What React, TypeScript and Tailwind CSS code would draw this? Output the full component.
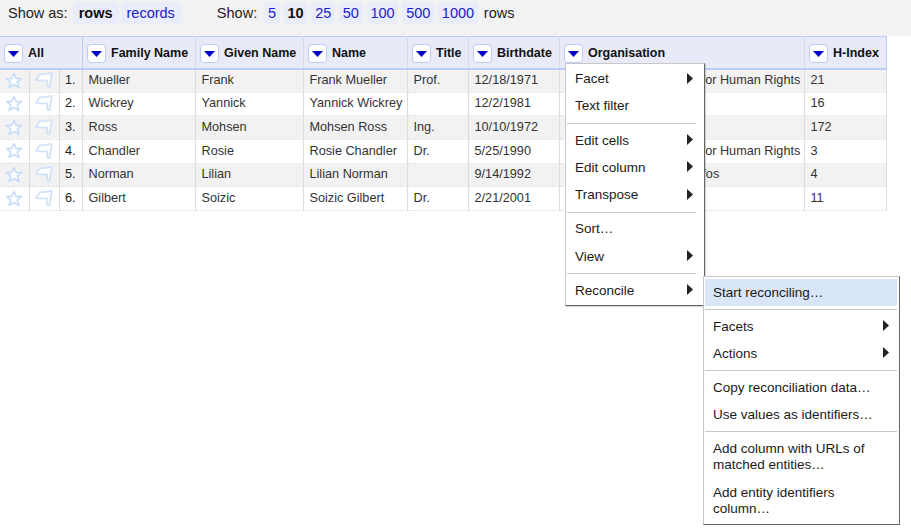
import { ReactNode } from "react"

const columns = [
  { name: "Family Name", width: 113 },
  { name: "Given Name", width: 108 },
  { name: "Name", width: 104 },
  { name: "Title", width: 61 },
  { name: "Birthdate", width: 91 },
  { name: "Organisation", width: 245 },
  { name: "H-Index", width: 82 },
]

const rows = [
  ["Mueller", "Frank", "Frank Mueller", "Prof.", "12/18/1971", "International Movement for Human Rights", "21"],
  ["Wickrey", "Yannick", "Yannick Wickrey", "", "12/2/1981", "", "16"],
  ["Ross", "Mohsen", "Mohsen Ross", "Ing.", "10/10/1972", "", "172"],
  ["Chandler", "Rosie", "Rosie Chandler", "Dr.", "5/25/1990", "International Movement for Human Rights", "3"],
  ["Norman", "Lilian", "Lilian Norman", "", "9/14/1992", "Syndicat National des Infos", "4"],
  ["Gilbert", "Soizic", "Soizic Gilbert", "Dr.", "2/21/2001", "", "11"],
]

function DropButton() {
  return (
    <span className="inline-flex h-[19px] w-[19px] shrink-0 items-center justify-center rounded-[4px] border border-[#b9cdf7] bg-white">
      <svg width="11" height="6" viewBox="0 0 11 6">
        <path d="M0 0h11L5.500 6z" fill="#0000c4" />
      </svg>
    </span>
  )
}

function Star() {
  return (
    <svg width="18" height="18" viewBox="0 0 18 18" fill="none">
      <path d="M9 1.500l2.200 5h5.300l-4.200 3.400 1.600 5.600L9 12.400l-4.900 3.100 1.600-5.600L1.500 6.500h5.300z" stroke="#c4dcf8" strokeWidth="1.600" strokeLinejoin="round" fill="#fff" />
    </svg>
  )
}

function Flag() {
  return (
    <svg width="18" height="17" viewBox="0 0 18 17" fill="none">
      <path d="M1 8L5 2c3 1 7 0 11.500-1 .5 3-.5 6-1 8l-1 6h-2l-.5-6.500C8 8 4 9 1 8z" stroke="#d0e3f9" strokeWidth="1.800" strokeLinejoin="round" fill="#fff" />
    </svg>
  )
}

function Arrow() {
  return (
    <svg width="6" height="11" viewBox="0 0 6 11" className="mb-[2px] shrink-0">
      <path d="M0 0l6 5.500L0 11z" fill="#222" />
    </svg>
  )
}

function MenuItem({ children, sub, active, wrap, tall }: { children: ReactNode; sub?: boolean; active?: boolean; wrap?: boolean; tall?: boolean }) {
  return (
    <div className={`flex items-center justify-between pl-2 pr-[3px] text-[13.500px] leading-[16px] text-[#1a1a1a] ${tall ? "py-[5.625px]" : "py-[5.500px]"} ${active ? "bg-[#d9e6f7]" : ""} ${wrap ? "pr-[14px]" : ""}`}>
      <span>{children}</span>
      {sub && <Arrow />}
    </div>
  )
}

function Divider() {
  return <div className="my-[3px] h-px bg-[#c8c8c8]" />
}

function PageLink({ children, bold }: { children: ReactNode; bold?: boolean }) {
  return (
    <span className={`rounded-[4px] bg-[#e9ecf9] px-[3.750px] py-[2px] ${bold ? "font-bold text-[#111]" : "text-[#2222cc]"}`}>
      {children}
    </span>
  )
}

export default function App() {
  return (
    <div className="relative h-[532px] w-[911px] overflow-hidden bg-white text-[12.700px] text-[#333]" style={{ fontFamily: '"Liberation Sans", Arial, sans-serif' }}>
      {/* Toolbar */}
      <div className="flex h-[36px] items-start bg-[#f2f2f2] pl-[8px] pt-[2px] text-[14.500px] leading-[18px] text-[#222]">
        <span className="mr-[5px] py-[2px]">Show as:</span>
        <span className="flex gap-[2px]">
          <span className="rounded-[4px] bg-[#e9ecf9] px-[6px] py-[2px] font-bold text-[#111]">rows</span>
          <span className="rounded-[4px] bg-[#e9ecf9] px-[6px] py-[2px] text-[#2222cc]">records</span>
        </span>
        <span className="ml-[36px] mr-[7px] py-[2px]">Show:</span>
        <span className="flex gap-[4px]">
          <PageLink>5</PageLink>
          <PageLink bold>10</PageLink>
          <PageLink>25</PageLink>
          <PageLink>50</PageLink>
          <PageLink>100</PageLink>
          <PageLink>500</PageLink>
          <PageLink>1000</PageLink>
        </span>
        <span className="ml-[6px] py-[2px]">rows</span>
      </div>

      {/* Data table */}
      <table className="w-[886px] table-fixed border-collapse">
        <colgroup>
          <col className="w-[29px]" />
          <col className="w-[30px]" />
          <col className="w-[23px]" />
          {columns.map((c) => (
            <col key={c.name} style={{ width: c.width }} />
          ))}
        </colgroup>
        <thead>
          <tr className="h-[32px] border-t border-b-[2px] border-[#b9cdf7] bg-[#e8ebf7] text-[12.500px]">
            <th colSpan={3} className="border-r border-[#b9cdf7] pl-[4px] pt-[3px] text-left">
              <span className="flex items-center gap-[5px] font-bold text-[#111]"><DropButton />All</span>
            </th>
            {columns.map((c) => (
              <th key={c.name} className="border-r border-[#d4dcf2] pl-[4.500px] pt-[3px] text-left last:border-[#b9cdf7]">
                <span className="flex items-center gap-[5px] font-bold text-[#111]"><DropButton />{c.name}</span>
              </th>
            ))}
          </tr>
        </thead>
        <tbody>
          {rows.map((row, i) => (
            <tr key={row[0]} className={`h-[23.670px] border-b border-dotted border-[#ddd] ${i % 2 === 0 ? "bg-[#f2f2f2]" : "bg-white"}`}>
              <td className="border-r border-[#ddd]"><span className="flex justify-center"><Star /></span></td>
              <td className="border-r border-[#ddd]"><span className="flex justify-center"><Flag /></span></td>
              <td className="border-r border-[#ddd] pr-[6px] text-right text-[#222]">{i + 1}.</td>
              {row.map((cell, j) => (
                <td key={j} className="overflow-hidden whitespace-nowrap border-r border-[#ddd] pl-[6px]">{cell}</td>
              ))}
            </tr>
          ))}
        </tbody>
      </table>

      {/* Column menu */}
      <div className="absolute left-[565px] top-[63px] z-10 w-[140px] border border-[#c8c8c8] border-b-[#666] border-r-[#666] bg-white px-px pt-[1.500px] shadow-[1px_1px_1px_rgba(0,0,0,0.15)]">
        <div className="pr-[7px]">
          <MenuItem sub tall>Facet</MenuItem>
          <MenuItem tall>Text filter</MenuItem>
          <Divider />
          <MenuItem sub tall>Edit cells</MenuItem>
          <MenuItem sub tall>Edit column</MenuItem>
          <MenuItem sub tall>Transpose</MenuItem>
          <Divider />
          <MenuItem tall>Sort…</MenuItem>
          <MenuItem sub tall>View</MenuItem>
          <Divider />
          <MenuItem sub tall>Reconcile</MenuItem>
        </div>
      </div>

      {/* Reconcile submenu */}
      <div className="absolute left-[703px] top-[276px] z-20 w-[197px] border border-[#c8c8c8] border-b-[#666] border-r-[#666] bg-white py-[2px] pl-px pr-[2px]">
        <MenuItem active>Start reconciling…</MenuItem>
        <Divider />
        <div className="pr-[5px]">
          <MenuItem sub>Facets</MenuItem>
          <MenuItem sub>Actions</MenuItem>
        </div>
        <Divider />
        <MenuItem>Copy reconciliation data…</MenuItem>
        <MenuItem>Use values as identifiers…</MenuItem>
        <Divider />
        <MenuItem wrap>Add column with URLs of matched entities…</MenuItem>
        <div className="pt-px">
          <MenuItem wrap>Add entity identifiers column…</MenuItem>
        </div>
      </div>
    </div>
  )
}
